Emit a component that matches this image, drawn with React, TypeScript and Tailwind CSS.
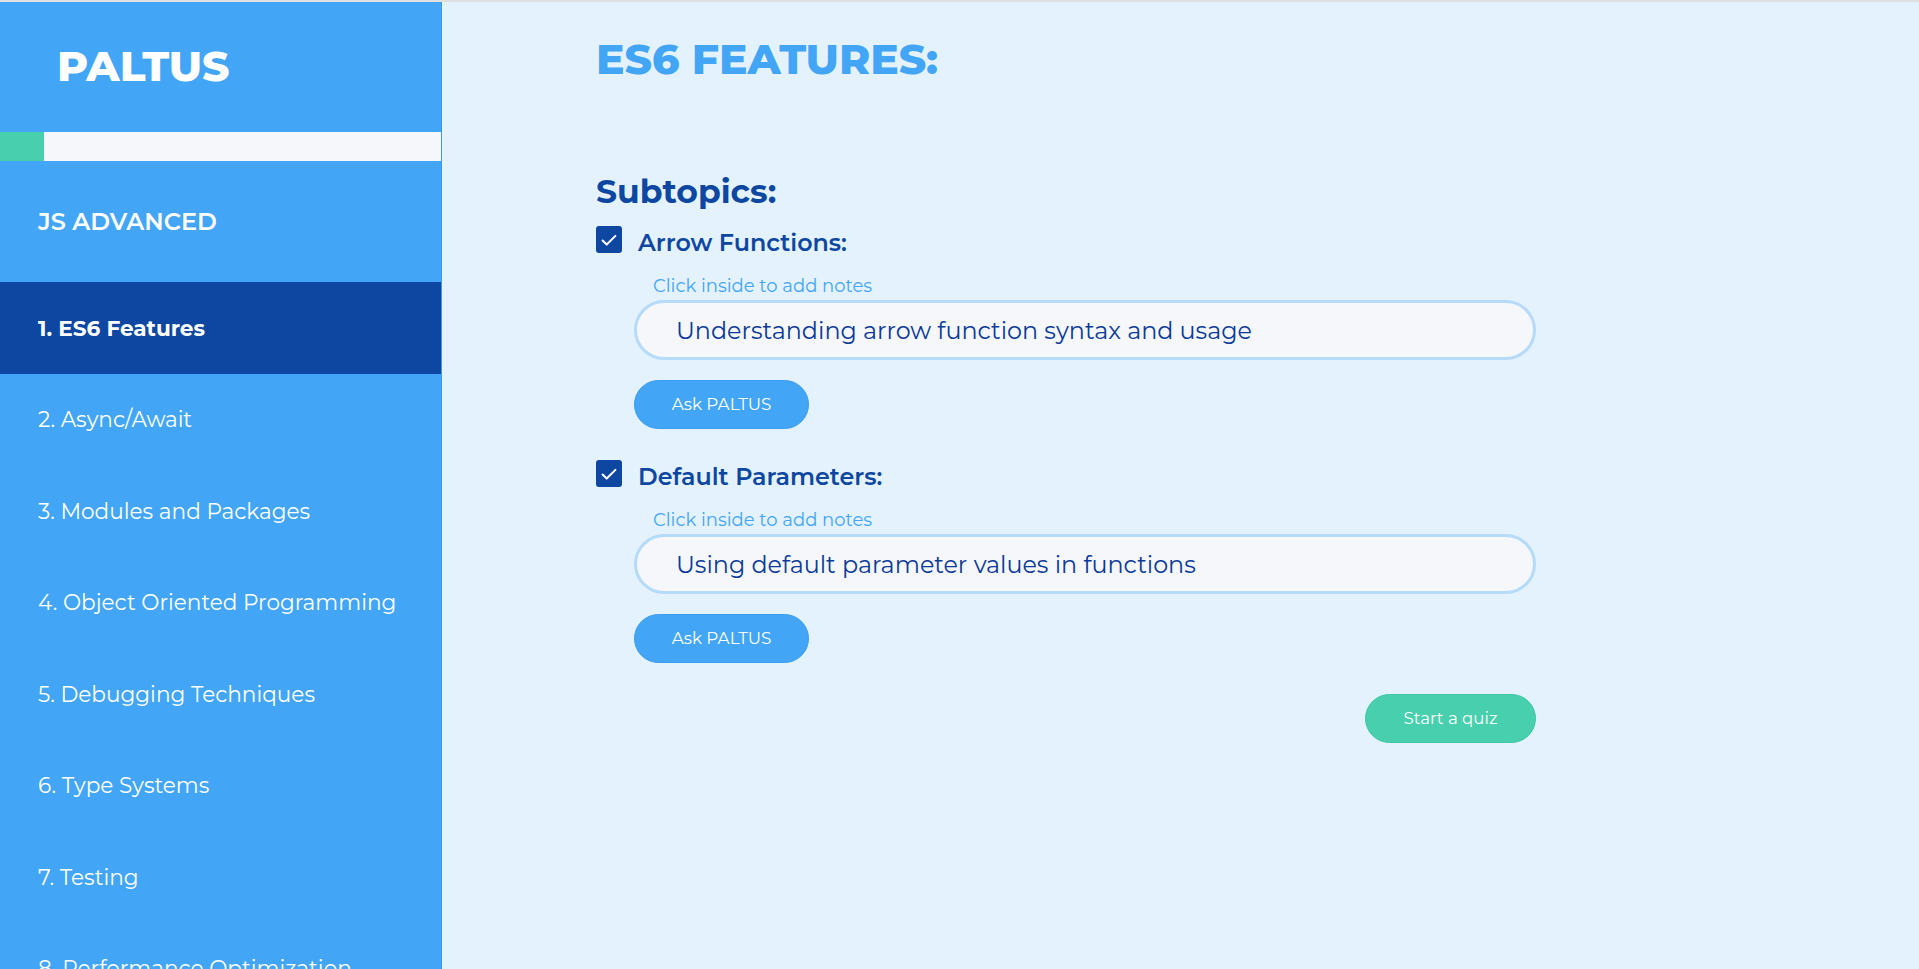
import { useState } from "react";

interface Topic {
  id: number;
  name: string;
}

interface Subtopic {
  title: string;
  notes: string;
}

const topics: Topic[] = [
  { id: 1, name: "ES6 Features" },
  { id: 2, name: "Async/Await" },
  { id: 3, name: "Modules and Packages" },
  { id: 4, name: "Object Oriented Programming" },
  { id: 5, name: "Debugging Techniques" },
  { id: 6, name: "Type Systems" },
  { id: 7, name: "Testing" },
  { id: 8, name: "Performance Optimization" },
];

const subtopics: Subtopic[] = [
  { title: "Arrow Functions:", notes: "Understanding arrow function syntax and usage" },
  { title: "Default Parameters:", notes: "Using default parameter values in functions" },
];

const font = { fontFamily: "Montserrat, Inter, 'Noto Sans', sans-serif" };

const CheckBox = ({ checked }: { checked: boolean }) => (
  <span className="flex h-[27px] w-[26px] shrink-0 items-center justify-center rounded-[3px] bg-[#0d47a1]">
    {checked && (
      <svg viewBox="0 0 24 24" className="h-[22px] w-[22px]" fill="none" stroke="white" strokeWidth={2.2} strokeLinecap="round" strokeLinejoin="round">
        <polyline points="5 12.5 9.5 17 19 7.5" />
      </svg>
    )}
  </span>
);

const SubtopicBlock = ({ item }: { item: Subtopic }) => {
  const [notes, setNotes] = useState(item.notes);
  return (
    <div className="flex flex-col">
      <div className="flex h-[27px] items-center gap-4">
        <CheckBox checked />
        <span className="mt-[7px] text-[23.8px] font-semibold text-[#0d47a1]">{item.title}</span>
      </div>
      <span className="ml-[57px] mt-[22px] text-[18px] leading-[22px] text-[#42a5f5]">Click inside to add notes</span>
      <input
        value={notes}
        onChange={e => setNotes(e.target.value)}
        className="ml-[38px] mt-[3px] h-[60px] w-[902px] rounded-full border-[3px] border-[#b5dbf8] bg-[#f5f7fb] pl-[39px] text-[23.8px] text-[#0b3a98] outline-none"
        style={font}
      />
      <button
        type="button"
        className="ml-[38px] mt-[20px] h-[49px] w-[175px] rounded-full border border-[#3a9cec] bg-[#42a5f5] text-[16.8px] text-white"
        style={font}
      >
        Ask PALTUS
      </button>
    </div>
  );
};

export default function App() {
  const [active, setActive] = useState(1);

  return (
    <div className="flex h-screen overflow-hidden border-t-2 border-[#e0e0e0] bg-[#e3f2fd]" style={font}>
      <aside className="flex w-[442px] shrink-0 flex-col overflow-hidden border-r border-[#3b9ae8] bg-[#42a5f5] text-white">
        <div className="flex h-[130px] shrink-0 items-center pl-[57px]">
          <h1 className="text-[42.4px] font-extrabold">PALTUS</h1>
        </div>
        <div className="flex h-[29px] shrink-0 bg-[#f5f7fb]">
          <div className="w-[44px] bg-[#48cfad]" />
        </div>
        <div className="flex h-[121px] shrink-0 items-center pl-[38px]">
          <h2 className="text-[24px] font-semibold">JS ADVANCED</h2>
        </div>
        <nav className="flex flex-col">
          {topics.map(t => (
            <button
              key={t.id}
              type="button"
              onClick={() => setActive(t.id)}
              className={`flex h-[91.5px] shrink-0 items-center pl-[38px] text-left text-[21.6px] ${
                active === t.id ? "bg-[#0d47a1] font-bold" : "font-normal"
              }`}
            >
              {t.id}. {t.name}
            </button>
          ))}
        </nav>
      </aside>

      <main className="flex-1 overflow-auto pl-[154px] pt-[33px]">
        <div className="flex w-[940px] flex-col">
          <h1 className="text-[42.4px] font-extrabold leading-[48px] text-[#42a5f5]">ES6 FEATURES:</h1>
          <h2 className="mt-[88px] text-[33px] font-bold leading-[40px] text-[#0d47a1]">Subtopics:</h2>
          <div className="mt-[15px] flex flex-col gap-[31px]">
            {subtopics.map(s => (
              <SubtopicBlock key={s.title} item={s} />
            ))}
          </div>
          <div className="mt-[31px] flex justify-end">
            <button
              type="button"
              className="h-[49px] w-[171px] rounded-full border border-[#3fc6a4] bg-[#48cfad] text-[16.6px] text-white"
              style={font}
            >
              Start a quiz
            </button>
          </div>
        </div>
      </main>
    </div>
  );
}
